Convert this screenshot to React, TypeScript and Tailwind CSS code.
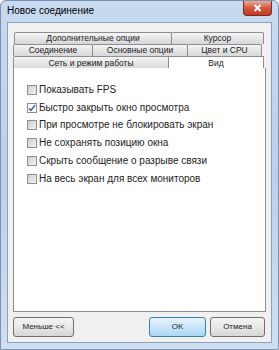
import { useState } from 'react'

const font = { fontFamily: '"Liberation Sans", Arial, sans-serif' }

type Tab = { label: string; w: string; active?: boolean }

const rows: Tab[][] = [
  [
    { label: 'Дополнительные опции', w: 'w-[158px]' },
    { label: 'Курсор', w: 'w-[93px]' },
  ],
  [
    { label: 'Соединение', w: 'w-[80px]' },
    { label: 'Основные опции', w: 'w-[96px]' },
    { label: 'Цвет и CPU', w: 'w-[75px]' },
  ],
]

const options = [
  { label: 'Показывать FPS', checked: false },
  { label: 'Быстро закрыть окно просмотра', checked: true },
  { label: 'При просмотре не блокировать экран', checked: false },
  { label: 'Не сохранять позицию окна', checked: false },
  { label: 'Скрыть сообщение о разрыве связи', checked: false },
  { label: 'На весь экран для всех мониторов', checked: false },
]

function TabButton({ tab }: { tab: Tab }) {
  return (
    <div
      className={`${tab.w} h-[12px] -ml-px first:ml-0 flex items-center justify-center border border-[#8c8e94] border-b-0 rounded-t-[2px] bg-gradient-to-b from-[#f4f4f4] to-[#d8d8d8] text-[8.5px] leading-none text-[#222]`}
    >
      {tab.label}
    </div>
  )
}

function Checkbox({ checked, onClick }: { checked: boolean; onClick: () => void }) {
  return (
    <div
      onClick={onClick}
      className="w-[10px] h-[10px] border border-[#8f8f8f] bg-white flex items-center justify-center"
    >
      <div
        className={`w-[8px] h-[8px] flex items-center justify-center ${checked ? 'bg-white' : 'bg-gradient-to-br from-[#cfcfcf] to-[#f2f2f2]'}`}
      >
        {checked && (
          <svg width="8" height="8" viewBox="0 0 8 8">
            <path d="M1 4.2 L3 6.5 L7 1" fill="none" stroke="#3b58a8" strokeWidth="1.4" />
          </svg>
        )}
      </div>
    </div>
  )
}

export default function App() {
  const [opts, setOpts] = useState(options)

  return (
    <div
      style={font}
      className="w-[279px] h-[350px] flex flex-col rounded-t-[6px] border border-[#7d92ae] bg-gradient-to-b from-[#c7daf0] via-[#bcd0e9] to-[#cfdff1]"
    >
      {/* заголовок */}
      <div className="h-[21px] flex items-start justify-between">
        <span className="pl-[6px] pt-[5px] text-[10px] leading-none text-black">Новое соединение</span>
        <div className="mr-[6px] w-[29px] h-[15px] rounded-b-[4px] border border-t-0 border-[#7a2a20] bg-gradient-to-b from-[#e9a99a] via-[#d2563e] to-[#c43a22] flex items-center justify-center">
          <svg width="9" height="8" viewBox="0 0 9 8">
            <path d="M1.5 1 L7.5 7 M7.5 1 L1.5 7" stroke="#fff" strokeWidth="2" />
          </svg>
        </div>
      </div>

      {/* клиентская область */}
      <div className="flex-1 mx-[6px] mb-[6px] border border-[#8ba0bc] bg-[#f0f0f0] flex flex-col px-[5px] pt-[9px] pb-[5px]">
        <div className="flex flex-col">
          {rows.map((row, i) => (
            <div key={i} className={`flex ${i === 0 ? 'ml-px' : ''}`}>
              {row.map(t => (
                <TabButton key={t.label} tab={t} />
              ))}
            </div>
          ))}
          <div className="flex">
            <div className="w-[156px] h-[13px] flex items-center justify-center border border-[#8c8e94] border-b-0 rounded-t-[2px] bg-gradient-to-b from-[#f4f4f4] to-[#d8d8d8] text-[8.5px] leading-none text-[#222]">
              Сеть и режим работы
            </div>
            <div className="w-[96px] h-[13px] -ml-px flex items-center justify-center border border-[#8c8e94] border-b-0 bg-white text-[8.5px] leading-none text-[#222]">
              Вид
            </div>
          </div>
        </div>

        {/* панель */}
        <div className="h-[244px] -mt-px border border-[#8c8e94] border-t-0 bg-white pt-[13px] pl-[13px]">
          <div className="flex flex-col">
            {opts.map((o, i) => (
              <div key={o.label} className="h-[17.8px] flex items-center gap-[2px]">
                <Checkbox
                  checked={o.checked}
                  onClick={() => setOpts(opts.map((x, j) => (j === i ? { ...x, checked: !x.checked } : x)))}
                />
                <span className="text-[10px] leading-none text-[#222]">{o.label}</span>
              </div>
            ))}
          </div>
        </div>

        {/* кнопки */}
        <div className="mt-[5px] flex items-center">
          <button className="w-[61px] h-[20px] rounded-[3px] border border-[#707070] bg-gradient-to-b from-[#f3f3f3] via-[#e8e8e8] to-[#d6d6d6] text-[8px] text-[#222]">
            Меньше &lt;&lt;
          </button>
          <div className="flex-1" />
          <button className="w-[57px] h-[20px] rounded-[3px] border border-[#3c7fb1] bg-gradient-to-b from-[#e5f3fc] via-[#c9e6fa] to-[#a9d8f5] text-[8px] text-[#222]">
            OK
          </button>
          <button className="ml-[4px] mr-px w-[55px] h-[20px] rounded-[3px] border border-[#707070] bg-gradient-to-b from-[#f3f3f3] via-[#e8e8e8] to-[#d6d6d6] text-[8px] text-[#222]">
            Отмена
          </button>
        </div>
      </div>
    </div>
  )
}
